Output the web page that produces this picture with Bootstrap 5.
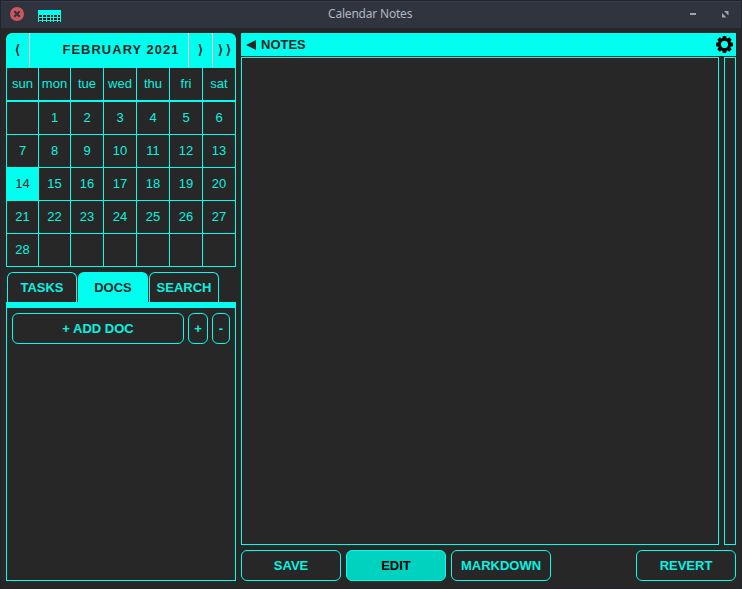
<!DOCTYPE html>
<html lang="en">
<head>
<meta charset="utf-8">
<meta name="viewport" content="width=device-width, initial-scale=1">
<title>Calendar Notes</title>
<link href="https://cdn.jsdelivr.net/npm/bootstrap@5.3.0/dist/css/bootstrap.min.css" rel="stylesheet">
<style>
:root { --cy: #00ffee; --tx: #0cf0e0; --bg: #272727; }
body { font: 13px/15px "Liberation Sans", Arial, sans-serif; background: #20242e; color: var(--tx); }
.window { height: 589px; width: 742px; background: var(--bg); border: 1px solid #20242e; border-top: 0; }
.titlebar { height: 28px; background: #2f343f; border-top: 1px solid #20232b; box-shadow: inset 0 1px #383e4a; color: #b0b6c1; font: 12px/24px "Noto Sans", sans-serif; padding: 0 12px 0 9px; }
.titlebar svg, .notes-head svg { display: block; }
.titlebar > svg { margin-bottom: 1px; }
.titlebar > .app-icon { margin: 2px 0 0 14px; }
.title-text { width: 84px; white-space: nowrap; margin-left: 267px; padding-bottom: 2px; letter-spacing: -.2px; }
.workspace { padding: 5px 5px 7px; gap: 5px; height: 560px; }
.side { width: 230px; }
.cal-head { height: 35px; background: var(--cy); color: var(--bg); border-radius: 6px 6px 0 0; font-weight: 700; padding-bottom: 1px; }
.cal-head > * { display: flex; align-items: center; justify-content: center; padding-bottom: 2px; }
.prev { width: 24px; border-right: 1px solid #fff; }
.month { width: 158px; letter-spacing: 1px; padding-left: 24px; }
.next { width: 24px; border-left: 1px solid #fff; }
.next.far { letter-spacing: 3px; padding-left: 2px; }
.days { display: grid; grid-template-columns: 33px 32px repeat(5, 33px); grid-template-rows: 34px repeat(5, 33px); }
.days > div { display: flex; align-items: center; justify-content: center; border-right: 1px solid var(--cy); border-bottom: 1px solid var(--cy); padding-bottom: 2px; }
.days > div:nth-child(7n+1) { border-left: 1px solid var(--cy); }
.days > div:nth-child(-n+7) { border-bottom-width: 2px; }
.days > .today { background: var(--cy); color: var(--bg); }
.tabs { margin-top: 5px; padding-left: 1px; gap: 1px; }
.tab-btn { width: 70px; height: 30px; border: 1px solid var(--cy); border-bottom: 0; border-radius: 6px 6px 0 0; background: none; color: var(--tx); font-weight: 700; padding: 0; }
.tab-btn.active { background: var(--cy); color: var(--bg); }
.doc-panel { border: 1px solid var(--cy); border-top-width: 6px; padding: 5px; }
.line-btn, .line-btn:hover { height: 31px; border: 1px solid var(--cy); border-radius: 6px; color: var(--tx); font-size: 13px; line-height: 15px; font-weight: 700; padding: 0; }
.w-add { width: 172px; } .w-plus { width: 20px; } .w-minus { width: 18px; } .w-cmd { width: 100px; }
.line-btn.lit { background: #00d2c0; color: #000; border-color: var(--cy); }
.notes-head { height: 23px; background: var(--cy); color: var(--bg); font-weight: 700; padding: 0 3px 0 5px; margin-bottom: 1px; gap: 5px; }
.editor, .scroll-lane { height: 488px; border: 1px solid var(--cy); }
.editor { width: 478px; background: none; resize: none; outline: 0; display: block; color: var(--tx); }
.scroll-lane { width: 12px; }
.cmds { gap: 5px; }
</style>
<script src="https://cdn.jsdelivr.net/npm/bootstrap@5.3.0/dist/js/bootstrap.bundle.min.js"></script>
</head>
<body class="overflow-hidden">
<div class="window overflow-hidden">
  <header class="titlebar d-flex align-items-center">
    <svg width="14" height="14" viewBox="0 0 14 14"><circle cx="7" cy="7" r="7" fill="#cc575d"/><path d="M4.300 4.300l5.400 5.400m0-5.400l-5.400 5.400" stroke="#2f343f" stroke-width="2"/></svg>
    <svg class="app-icon" width="23" height="12" viewBox="0 0 23 12" shape-rendering="crispEdges"><path d="M0 0h23v12H0z" fill="#00ffee"/><path d="M1 5h3v2H1zm4 0h3v2H5zm4 0h3v2H9zm4 0h2v2h-2zm3 0h3v2h-3zm4 0h2v2h-2zM1 8h3v2H1zm4 0h3v2H5zm4 0h3v2H9zm4 0h2v2h-2zm3 0h3v2h-3zm4 0h2v2h-2zM1 11h3v1H1zm4 0h3v1H5zm4 0h3v1H9zm4 0h2v1h-2zm3 0h3v1h-3zm4 0h2v1h-2z" fill="#081414"/></svg>
    <div class="title-text">Calendar Notes</div>
    <svg class="ms-auto" width="40" height="8" viewBox="0 0 40 8"><path d="M1 3h6v2H1z" fill="#a0a5af"/><path d="M35 1h4.500v4.500zM33 3v4.500h4.500z" fill="#a0a5af"/></svg>
  </header>
  <main class="workspace d-flex">
    <aside class="side d-flex flex-column">
      <div class="cal-head d-flex overflow-hidden">
        <div class="prev">⟨</div><div class="month">FEBRUARY 2021</div><div class="next">⟩</div><div class="next far">⟩⟩</div>
      </div>
      <div class="days">
        <div>sun</div><div>mon</div><div>tue</div><div>wed</div><div>thu</div><div>fri</div><div>sat</div>
        <div></div><div>1</div><div>2</div><div>3</div><div>4</div><div>5</div><div>6</div>
        <div>7</div><div>8</div><div>9</div><div>10</div><div>11</div><div>12</div><div>13</div>
        <div class="today">14</div><div>15</div><div>16</div><div>17</div><div>18</div><div>19</div><div>20</div>
        <div>21</div><div>22</div><div>23</div><div>24</div><div>25</div><div>26</div><div>27</div>
        <div>28</div><div></div><div></div><div></div><div></div><div></div><div></div>
      </div>
      <div class="tabs d-flex">
        <button class="tab-btn">TASKS</button><button class="tab-btn active">DOCS</button><button class="tab-btn">SEARCH</button>
      </div>
      <section class="doc-panel flex-grow-1">
        <div class="d-flex gap-1">
          <button class="btn line-btn w-add">+ ADD DOC</button><button class="btn line-btn w-plus">+</button><button class="btn line-btn w-minus">-</button>
        </div>
      </section>
    </aside>
    <section class="flex-grow-1 d-flex flex-column">
      <div class="notes-head d-flex align-items-center">
        <svg width="10" height="10" viewBox="0 0 10 10"><path d="M0 5l10-5v10z" fill="#272727"/></svg>
        <span>NOTES</span>
        <svg class="ms-auto" width="17" height="17" viewBox="-8.5 -8.5 17 17"><g fill="#000"><g id="teeth"><path id="t" d="M-1.700-8.500h3.400l.8 4h-5z"/><use href="#t" transform="rotate(45)"/><use href="#t" transform="rotate(90)"/><use href="#t" transform="rotate(135)"/></g><use href="#teeth" transform="rotate(180)"/></g><circle r="4.900" fill="none" stroke="#000" stroke-width="3"/><circle r="3.400" fill="#00ffee"/></svg>
      </div>
      <div class="d-flex justify-content-between">
        <textarea class="editor" aria-label="Notes"></textarea>
        <div class="scroll-lane"></div>
      </div>
      <div class="d-flex mt-auto cmds">
        <button class="btn line-btn w-cmd">SAVE</button><button class="btn line-btn w-cmd lit">EDIT</button><button class="btn line-btn w-cmd">MARKDOWN</button><button class="btn line-btn w-cmd ms-auto">REVERT</button>
      </div>
    </section>
  </main>
</div>
</body>
</html>
